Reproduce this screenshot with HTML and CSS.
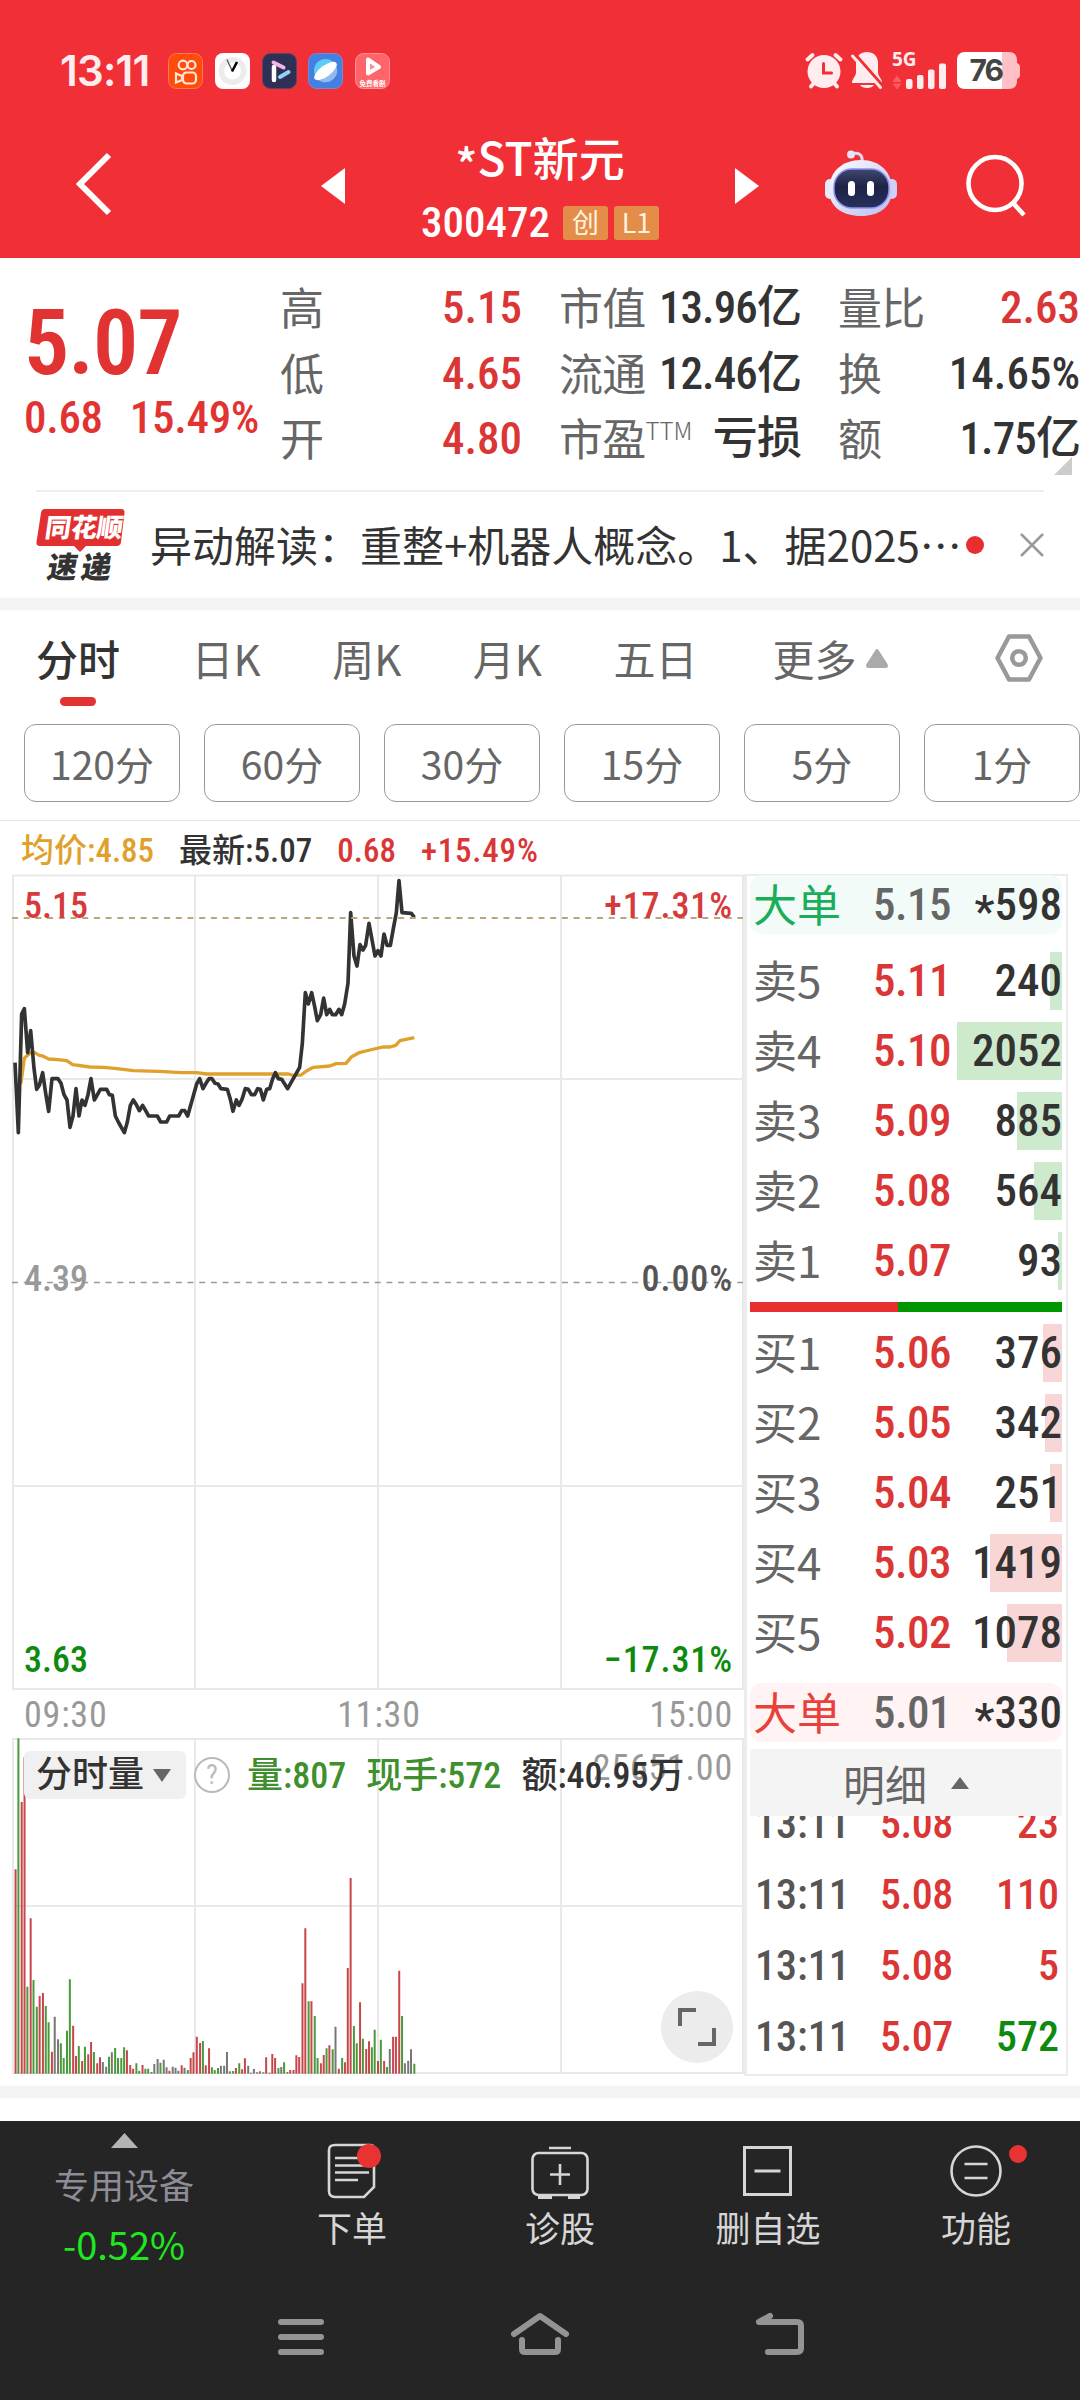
FILE: index.html
```html
<!DOCTYPE html>
<html lang="zh-CN">
<head>
<meta charset="utf-8">
<title>*ST新元 300472</title>
<link rel="stylesheet" href="styles.css">
</head>
<body>
<div class="phone">
  <header class="top">
    <div class="status">
      <span class="clock">13:11</span>
      <div class="apps">
        <svg class="app" viewBox="0 0 35 36"><rect x=".5" y=".5" width="34" height="35" rx="8" fill="#ff4b0b" stroke="#ff7a4a"/><g fill="none" stroke="#ffe6d6" stroke-width="2.2"><circle cx="15" cy="12" r="4.3"/><circle cx="23.5" cy="12" r="4"/><rect x="15" y="19.5" width="13" height="11" rx="3.5"/><path d="M14 23l-6-2.5v9l6-2.500z"/></g></svg>
        <svg class="app" viewBox="0 0 35 36"><rect width="35" height="36" rx="8" fill="#fff"/><circle cx="17.500" cy="18" r="14" fill="#ececec"/><circle cx="17.500" cy="18" r="8.500" fill="#fff"/><path d="M12 6.500l5 11" stroke="#555" stroke-width="1.300"/><path d="M17 18.500l5-9.500" stroke="#000" stroke-width="2.500"/></svg>
        <svg class="app" viewBox="0 0 35 36"><rect x=".5" y=".5" width="34" height="35" rx="8" fill="#2f3055" stroke="#5a4468"/><path d="M12 14v13" stroke="#fff" stroke-width="4.500" stroke-linecap="round"/><path d="M11.500 9.500l10 5" stroke="#f2b6e6" stroke-width="4" stroke-linecap="round"/><path d="M18 24l8.500-5" stroke="#8fd3f5" stroke-width="4" stroke-linecap="round"/></svg>
        <svg class="app" viewBox="0 0 35 36"><rect x=".5" y=".5" width="34" height="35" rx="8" fill="#4380df" stroke="#7d87d8"/><circle cx="17.500" cy="17.500" r="11.500" fill="#5ecbf4"/><path d="M9 26a12 12 0 0 0 20-11z" fill="#94b9ef"/><ellipse cx="17.500" cy="18" rx="13.500" ry="5.500" transform="rotate(-37 17.500 18)" fill="#fff"/></svg>
        <svg class="app" viewBox="0 0 35 36"><rect x=".5" y=".5" width="34" height="35" rx="8" fill="#ff6468" stroke="#ff9093"/><path d="M13 6.500v14l11-6.500z" fill="#ff8d90" stroke="#fff" stroke-width="4" stroke-linejoin="round"/><text x="17.500" y="32.500" class="app-tag">免费看剧</text></svg>
      </div>
      <div class="sys">
        <svg width="38" height="37" viewBox="0 0 38 37"><g stroke="#ffecee" stroke-width="4" stroke-linecap="round"><path d="M2.500 7.500l5-4.500M35.500 7.500l-5-4.500M6 34.500l3-3.500M32 34.500l-3-3.500"/></g><circle cx="19" cy="19.500" r="16.500" fill="#ffecee"/><path d="M18.500 11.500v9.500h8" fill="none" stroke="#f12f37" stroke-width="3" stroke-linecap="round"/></svg>
        <svg class="bell" width="32" height="37" viewBox="0 0 32 37"><path d="M16 0c6 0 11 4 11 10.500V20c0 5 4 6 4 11H1c0-5 4-6 4-11v-9.500C5 4 10 0 16 0zM9 33h14c-2 4-12 4-14 0z" fill="#ffecee"/><path d="M3 1l29 33" stroke="#f12f37" stroke-width="3"/><path d="M1.500 4l28 31.500" stroke="#ffecee" stroke-width="3" stroke-linecap="round"/></svg>
        <svg class="signal" width="56" height="37" viewBox="0 0 56 37"><text x="0" y="14" class="fiveg">5G</text><path d="M.5 30l4.500-7 4.500 7zM.5 31.500h9l-4.500 6z" fill="#ff5c63"/><g fill="#ffecee"><rect x="14" y="27" width="6.500" height="10" rx="2"/><rect x="25" y="23" width="6.500" height="14" rx="2"/><rect x="36" y="17.500" width="6.500" height="19.500" rx="2"/><rect x="47" y="11.500" width="7" height="25.500" rx="2"/></g></svg>
        <svg class="battery" width="63" height="37" viewBox="0 0 63 37"><path d="M45 0h7c5 0 8 3 8 8v3c2 1 3 2 3 4v8c0 2-1 3-3 4v2c0 5-3 8-8 8h-7z" fill="#ffc1c5"/><path d="M8 0h37v37H8c-5 0-8-3-8-8V8c0-5 3-8 8-8z" fill="#fff"/><text x="12.500" y="29" class="batt">76</text></svg>
      </div>
    </div>
    <div class="navrow">
      <svg class="back" width="38" height="66" viewBox="0 0 38 66"><path d="M33 4L4 33l29 29" fill="none" stroke="#fff" stroke-width="6"/></svg>
      <svg class="prev" width="24" height="36" viewBox="0 0 24 36"><path d="M24 0v36L0 18z" fill="#fff"/></svg>
      <div class="title">
        <h1><span class="star">*</span>ST新元</h1>
        <div class="code"><span class="num">300472</span><i class="tag">创</i><i class="tag">L1</i></div>
      </div>
      <svg class="next" width="24" height="36" viewBox="0 0 24 36"><path d="M0 0v36l24-18z" fill="#fff"/></svg>
      <svg class="robot" width="72" height="68" viewBox="0 0 72 68">
        <defs><linearGradient id="shell" x1="0" y1="0" x2="1" y2="1"><stop offset="0" stop-color="#fff"/><stop offset="1" stop-color="#b9bdf0"/></linearGradient><linearGradient id="visor" x1="0" y1="0" x2="0" y2="1"><stop offset="0" stop-color="#41486f"/><stop offset=".45" stop-color="#1c2346"/><stop offset="1" stop-color="#27305c"/></linearGradient></defs>
        <path d="M26 5c7-2 12 0 11 8" fill="none" stroke="#dcdcf5" stroke-width="3"/><circle cx="26" cy="5.500" r="4" fill="#e4e5fa"/>
        <rect x="0" y="30" width="10" height="20" rx="5" fill="#e6e8fb"/><rect x="62" y="30" width="10" height="20" rx="5" fill="#cfd2f5"/>
        <path d="M36 11c19 0 31 12 31 30 0 17-13 26-31 26S4 58 4 41c0-18 13-30 32-30z" fill="url(#shell)"/>
        <rect x="9" y="20" width="55" height="39" rx="18" fill="url(#visor)" stroke="#8f8ff0" stroke-width="1.500"/>
        <rect x="23" y="32" width="7" height="15" rx="3.500" fill="#fff"/><rect x="42" y="32" width="7" height="15" rx="3.500" fill="#fff"/>
      </svg>
      <svg class="search" width="62" height="64" viewBox="0 0 62 64"><circle cx="29" cy="29.500" r="26.500" fill="none" stroke="#fff" stroke-width="4.600"/><path d="M47 49l11 12" stroke="#fff" stroke-width="4.600"/></svg>
    </div>
  </header>

  <section class="quote">
    <div class="price num">
      <div class="last">5.07</div>
      <div class="chg"><span>0.68</span><span>15.49%</span></div>
    </div>
    <dl class="col">
      <div><dt>高</dt><dd class="up">5.15</dd></div>
      <div><dt>低</dt><dd class="up">4.65</dd></div>
      <div><dt>开</dt><dd class="up">4.80</dd></div>
    </dl>
    <dl class="col">
      <div><dt>市值</dt><dd class="tight">13.96亿</dd></div>
      <div><dt>流通</dt><dd class="tight">12.46亿</dd></div>
      <div><dt>市盈<sup>TTM</sup></dt><dd class="tight">亏损</dd></div>
    </dl>
    <dl class="col">
      <div><dt>量比</dt><dd class="up">2.63</dd></div>
      <div><dt>换</dt><dd>14.65%</dd></div>
      <div><dt>额</dt><dd class="tight">1.75亿</dd></div>
    </dl>
    <i class="expand"></i>
  </section>

  <section class="news">
    <svg class="logo" width="90" height="74" viewBox="0 0 90 74"><path d="M9 1h76q4 0 3.500 4L85 34q-.5 4-4.500 4H50l-6 6-6-6H4q-4 0-3.500-4L5 5q.5-4 4-4z" fill="#e23030"/><text x="9" y="29" class="logo-a" transform="skewX(-8) translate(3 0)">同花顺</text><text x="10" y="70" class="logo-b" transform="skewX(-10) translate(12 0)">速递</text></svg>
    <p>异动解读：重整+机器人概念。1、据2025…</p>
    <i class="dot"></i>
    <svg class="close" width="24" height="24" viewBox="0 0 24 24"><path d="M1 1l22 22M23 1L1 23" stroke="#999" stroke-width="2.500"/></svg>
  </section>
  <div class="band"></div>

  <nav class="tabs">
    <span class="on">分时</span><span>日K</span><span>周K</span><span>月K</span><span class="five">五日</span><span class="more">更多<svg width="22" height="19" viewBox="0 0 22 19"><path d="M11 0q1 0 1.500 1l9 14q1.500 4-2 4h-17q-3.500 0-2-4l9-14q.5-1 1.500-1z" fill="#aaa"/></svg></span>
    <svg class="gear" width="48" height="48" viewBox="0 0 48 48"><g fill="none" stroke="#999" stroke-width="4.500" stroke-linejoin="round"><path d="M14 2.500h20L45.500 24 34 45.500H14L2.500 24z"/><circle cx="24" cy="24" r="6.800"/></g></svg>
  </nav>
  <div class="chips"><span>120分</span><span>60分</span><span>30分</span><span>15分</span><span>5分</span><span>1分</span></div>

  <div class="info"><span class="avg">均价:4.85</span><span>最新:5.07</span><span class="up">0.68</span><span class="up pct">+15.49%</span></div>

  <main class="market">
    <div class="chart">
      <svg width="744" height="1202" viewBox="0 874 744 1202">
        <g stroke="#e9e9e9" stroke-width="2" fill="none">
          <path d="M13 875.500h730V1689H13zM195 876v813M378 876v813M561 876v813M13 1079h730M13 1486h730"/>
          <path d="M13 1739h730v334H13zM195 1739v334M378 1739v334M561 1739v334M13 1906h730"/>
        </g>
        <path d="M12 1282.500h731" stroke="#999" stroke-width="1.500" stroke-dasharray="6 5.700"/>
        <g fill="none" stroke-linejoin="round" transform="translate(0 860) scale(.33333)">
          <polyline stroke="#dfa12c" stroke-width="10" points="62,672 67,640 73,594 92,578 104,578 118,586 128,588 146,597 174,599 200,602 218,614 270,621 310,622 345,625 400,632 475,634 545,638 590,638 620,642 865,642 880,646 903,645 918,634 940,622 990,618 1008,611 1038,610 1055,590 1080,577 1110,570 1150,561 1170,561 1187,556 1200,542 1243,533"/>
          <polyline stroke="#333" stroke-width="11" points="45,608 55,818 65,462 73,446 83,578 92,512 102,625 110,688 118,676 128,638 137,700 146,754 156,656 174,656 183,670 192,704 201,720 210,802 219,768 228,686 237,768 246,720 255,736 264,704 273,656 283,720 301,688 320,688 328,704 337,706 346,768 355,786 373,818 382,786 391,736 400,720 410,736 418,752 428,736 446,768 472,768 482,786 500,786 509,768 536,768 545,752 554,752 563,768 572,736 590,672 599,656 609,686 618,670 627,656 636,656 645,670 654,672 663,686 682,688 691,718 699,754 709,720 717,736 726,718 736,686 745,688 754,704 764,704 773,686 781,688 790,720 800,688 809,686 818,656 826,638 835,656 845,658 863,686 882,652 899,622 907,550 916,398 925,432 935,398 944,440 952,482 962,464 971,414 980,464 989,448 997,464 1007,464 1017,448 1025,464 1034,432 1044,370 1052,158 1062,288 1071,318 1080,254 1089,270 1097,256 1107,190 1125,288 1134,272 1143,288 1152,222 1161,256 1171,256 1180,206 1189,158 1197,62 1206,158 1234,160 1243,172"/>
        </g>
        <path d="M12 918h731" stroke="#b9a67b" stroke-width="1.800" stroke-dasharray="6 5.700"/>
        <g class="vol" transform="translate(0 1640) scale(.4719 .33333)">
          <path stroke="#c8464a" d="M33 1301V688M46 1301V486M52 1301V352M65 1301V835M84 1301V1068M91 1301V1059M110 1301V1235M155 1301V1157M161 1301V1248M174 1301V1263M187 1301V1243M193 1301V1206M206 1301V1270M212 1301V1252M269 1301V1231M276 1301V1275M282 1301V1286M302 1301V1275M359 1301V1292M385 1301V1276M404 1301V1254M410 1301V1237M417 1301V1190M424 1301V1209M436 1301V1276M443 1301V1225M500 1301V1284M513 1301V1288M519 1301V1255M545 1301V1297M564 1301V1252M571 1301V1298M577 1301V1242M583 1301V1254M615 1301V1290M622 1301V1290M628 1301V1246M634 1301V1251M641 1301V1030M647 1301V865M660 1301V1084M680 1301V1270M686 1301V1245M698 1301V1216M718 1301V1286M731 1301V1267M737 1301V984M743 1301V714M763 1301V1087M776 1301V1227M782 1301V1204M801 1301V1263M814 1301V1263M833 1301V1190M839 1301V1190M846 1301V992"/>
          <path stroke="#4a9a3c" d="M39 1301V295M58 1301V1040M71 1301V1020M78 1301V1100M97 1301V1098M103 1301V1147M129 1301V1210M135 1301V1254M142 1301V1172M148 1301V1018M167 1301V1218M180 1301V1220M199 1301V1236M231 1301V1250M244 1301V1224M250 1301V1254M257 1301V1254M263 1301V1222M289 1301V1270M295 1301V1292M308 1301V1286M314 1301V1286M340 1301V1268M398 1301V1290M430 1301V1203M449 1301V1282M455 1301V1290M462 1301V1284M487 1301V1294M494 1301V1293M507 1301V1270M558 1301V1297M590 1301V1284M602 1301V1267M609 1301V1296M654 1301V1084M667 1301V1128M673 1301V1254M692 1301V1225M705 1301V1228M725 1301V1254M750 1301V1158M756 1301V1210M769 1301V1196M788 1301V1222M794 1301V1169M807 1301V1199M820 1301V1281M852 1301V1128M878 1301V1271"/>
          <path stroke="#777" d="M116 1301V1130M123 1301V1198M218 1301V1266M225 1301V1280M237 1301V1237M321 1301V1296M327 1301V1272M334 1301V1257M347 1301V1259M353 1301V1282M366 1301V1280M372 1301V1283M378 1301V1292M391 1301V1283M468 1301V1277M475 1301V1277M481 1301V1236M526 1301V1277M532 1301V1298M538 1301V1287M551 1301V1294M596 1301V1281M711 1301V1160M826 1301V1227M858 1301V1270M865 1301V1262M871 1301V1228"/>
        </g>
        <g class="axis">
          <text x="24" y="918" fill="#d63a3a">5.15</text><text x="733" y="918" class="end" fill="#d63a3a">+17.31%</text>
          <text x="24" y="1291" fill="#999">4.39</text><text x="733" y="1291" class="end" fill="#555">0.00%</text>
          <text x="24" y="1672" fill="#0e8a0e">3.63</text><text x="733" y="1672" class="end" fill="#0e8a0e">−17.31%</text>
          <g class="thin" fill="#999"><text x="24" y="1727">09:30</text><text x="379" y="1727" class="mid">11:30</text><text x="733" y="1727" class="end">15:00</text><text x="733" y="1780" class="end">25651.00</text></g>
        </g>
      </svg>
      <div class="volbar">
        <span class="pick">分时量<svg width="18" height="13" viewBox="0 0 18 13"><path d="M0 0h18L9 13z" fill="#666"/></svg></span>
        <i class="help">?</i>
        <span class="down">量:807</span><span class="down">现手:572</span><span class="amt">额:40.95万</span>
      </div>
      <div class="full"><svg width="38" height="38" viewBox="0 0 38 38"><path d="M2 18V2h16M36 20v16H20" fill="none" stroke="#666" stroke-width="4"/></svg></div>
    </div>

    <aside class="book">
      <div class="big sell"><b>大单</b><span>5.15</span><em><u class="star">*</u>598</em></div>
      <ul class="asks">
        <li><b>卖5</b><span>5.11</span><em>240</em><i style="width:12px"></i></li>
        <li><b>卖4</b><span>5.10</span><em>2052</em><i style="width:105px"></i></li>
        <li><b>卖3</b><span>5.09</span><em>885</em><i style="width:45px"></i></li>
        <li><b>卖2</b><span>5.08</span><em>564</em><i style="width:28px"></i></li>
        <li><b>卖1</b><span>5.07</span><em>93</em><i style="width:4px"></i></li>
      </ul>
      <div class="ratio"><i></i></div>
      <ul class="bids">
        <li><b>买1</b><span>5.06</span><em>376</em><i style="width:19px"></i></li>
        <li><b>买2</b><span>5.05</span><em>342</em><i style="width:17px"></i></li>
        <li><b>买3</b><span>5.04</span><em>251</em><i style="width:12px"></i></li>
        <li><b>买4</b><span>5.03</span><em>1419</em><i style="width:72px"></i></li>
        <li><b>买5</b><span>5.02</span><em>1078</em><i style="width:55px"></i></li>
      </ul>
      <div class="big buy"><b>大单</b><span>5.01</span><em><u class="star">*</u>330</em></div>
      <div class="detail">明细<svg width="18" height="12" viewBox="0 0 18 12"><path d="M0 12h18L9 0z" fill="#666"/></svg></div>
      <ul class="ticks">
        <li><b>13:11</b><span>5.08</span><em>23</em></li>
        <li><b>13:11</b><span>5.08</span><em>110</em></li>
        <li><b>13:11</b><span>5.08</span><em>5</em></li>
        <li><b>13:11</b><span>5.07</span><em class="dn">572</em></li>
      </ul>
    </aside>
  </main>
  <div class="band"></div>

  <footer class="bottom">
    <div class="actions">
      <div class="sector"><svg width="27" height="15" viewBox="0 0 27 15"><path d="M0 15h27L13.500 0z" fill="#b4b4b4"/></svg><span>专用设备</span><strong>-0.52%</strong></div>
      <div class="act"><svg width="60" height="56" viewBox="0 0 60 56"><g fill="none" stroke="#d6d6d6" stroke-width="2.600"><path d="M13 2h35q4 0 4 4v38L42 54H13q-6 0-6-6V7q0-5 6-5z"/><path d="M13 15h30M13 22.500h34M13 29.500h34M13 37h23"/></g><circle cx="47" cy="13" r="12" fill="#e93232"/></svg><span>下单</span></div>
      <div class="act"><svg width="60" height="56" viewBox="0 0 60 56"><g fill="none" stroke="#d6d6d6" stroke-width="2.600"><rect x="2.500" y="10" width="55" height="42" rx="6"/><path d="M19 5h22M30 21v21M20 31.500h20"/><path d="M8 54h14M38 54h12" stroke-width="4"/></g></svg><span>诊股</span></div>
      <div class="act"><svg width="60" height="56" viewBox="0 0 60 56"><g fill="none" stroke="#d6d6d6" stroke-width="3"><rect x="6.500" y="4.500" width="46" height="47"/><path d="M16.500 28h26"/></g></svg><span>删自选</span></div>
      <div class="act"><svg width="60" height="56" viewBox="0 0 60 56" overflow="visible"><g fill="none" stroke="#d6d6d6" stroke-width="2.600"><circle cx="30" cy="28" r="24.500"/><path d="M18.500 21h23M18.500 35h23"/></g><circle cx="72" cy="11" r="9" fill="#e93232"/></svg><span>功能</span></div>
    </div>
    <div class="sysnav">
      <svg width="46" height="44" viewBox="0 0 46 44"><path d="M3 9h40M3 24h40M3 39h40" stroke="#949494" stroke-width="6" stroke-linecap="round"/></svg>
      <svg width="60" height="44" viewBox="0 0 60 44"><g fill="none" stroke="#949494" stroke-width="6" stroke-linecap="round" stroke-linejoin="round"><path d="M4 21L30 3l26 18M12 27v9q0 3 3 3h30q3 0 3-3v-9"/></g></svg>
      <svg width="48" height="44" viewBox="0 0 48 44"><path d="M14 3L3 9h38q4 0 4 4v22q0 4-4 4H12" fill="none" stroke="#949494" stroke-width="6" stroke-linecap="round" stroke-linejoin="round"/></svg>
    </div>
  </footer>
</div>
</body>
</html>
```
FILE: styles.css
```css
* { box-sizing: border-box; margin: 0; padding: 0; }
body { width: 1080px; background: #fff; color: #333; font-family: "Noto Sans CJK SC", sans-serif; }
svg { display: block; flex: none; overflow: visible; }
i, em { font-style: normal; }
ul { list-style: none; }
b, em, h1, strong { font-weight: 400; }
.phone { width: 1080px; height: 2400px; display: flex; flex-direction: column; overflow: hidden; }
.num, dd, .axis, .book span, .book em, .ticks b, .info, .volbar { font-family: Roboto, "Noto Sans CJK SC", sans-serif; font-stretch: 75%; font-weight: 500; }
.up { color: #db3636; }
.star { text-decoration: none; vertical-align: -7px; line-height: 0; }

/* header */
.top { height: 258px; background: #f12f37; color: #fff; flex: none; }
.status { height: 141px; display: flex; align-items: center; padding-left: 60px; }
.clock { font: 600 42px/60px Inter, sans-serif; width: 108px; letter-spacing: -.8px; color: #ffecee; }
.apps { display: flex; gap: 11.800px; }
.app { width: 35px; height: 36px; }
.app-tag { font: 700 6.500px "Noto Sans CJK SC", sans-serif; fill: #fff; text-anchor: middle; }
.sys { display: flex; margin-left: 415px; }
.bell { margin-left: 8px; }
.signal { margin-left: 9px; }
.battery { margin-left: 9px; }
.fiveg { font: 700 19px "Open Sans", sans-serif; fill: #ffecee; }
.batt { font: 700 30px Inter, sans-serif; fill: #444; letter-spacing: -2px; }
.navrow { display: flex; align-items: flex-start; height: 117px; padding-left: 76px; }
.back { margin-top: 10px; }
.prev { margin: 27px 0 0 207px; }
.title { width: 390px; display: flex; flex-direction: column; align-items: center; }
h1 { font-size: 46px; font-weight: 500; line-height: 60px; margin-top: -15px; }
.code { display: flex; align-items: center; height: 44px; margin-top: 14px; }
.code .num { font-size: 43px; line-height: 44px; margin-right: 13px; }
.tag { width: 45px; height: 34px; margin: 2px 6px 0 0; border-radius: 3px; background: #e48d48; color: #fff3e0; font-size: 27px; line-height: 32px; text-align: center; }
.tag:last-child { margin-right: 0; }
.next { margin-top: 27px; }
.robot { margin: 8px 0 0 66px; }
.search { margin: 13px 0 0 69px; }

/* quote */
.quote { height: 232px; flex: none; display: flex; gap: 39px; position: relative; padding-top: 17px; }
.price { width: 243px; padding-left: 24px; color: #e23333; white-space: nowrap; }
.last { font-size: 90px; font-weight: 600; line-height: 100px; margin-top: 19px; letter-spacing: -1px; }
.chg { font-size: 45px; line-height: 50px; display: flex; gap: 27px; margin-top: -1px; letter-spacing: -.3px; }
.col { width: 240px; }
.col div { height: 65.700px; display: flex; justify-content: space-between; align-items: center; white-space: nowrap; }
dt { font-size: 44px; line-height: 60px; padding-bottom: 4px; margin-left: -2px; color: #666; letter-spacing: -.8px; }
dt sup { font-size: 24px; font-weight: 300; line-height: 0; vertical-align: 16px; letter-spacing: 0; }
dd { font-size: 45px; line-height: 60px; }
.tight { letter-spacing: -.9px; }
.expand { position: absolute; right: 8px; bottom: 15px; border: 9px solid #ccc; border-left-color: transparent; border-top-color: transparent; }

/* news line */
.news { height: 108px; flex: none; display: flex; align-items: center; margin: 0 36px; border-top: 2px solid #eee; }
.news p { font-size: 42px; line-height: 60px; margin: 0 0 2px 24px; width: 816px; white-space: nowrap; }
.logo-a { font: 900 26px "Noto Sans CJK SC", sans-serif; fill: #fff; }
.logo-b { font: 900 30px "Noto Sans CJK SC", sans-serif; fill: #333; letter-spacing: 4px; }
.dot { width: 18px; height: 18px; border-radius: 9px; background: #e82f2f; }
.close { margin-left: 36px; }
.band { height: 12px; flex: none; background: #f4f4f4; }

/* period tabs */
.tabs { height: 103px; flex: none; display: flex; padding-left: 36px; font-size: 42px; line-height: 96px; color: #666; }
.tabs > span { position: relative; margin-right: 71.500px; }
.tabs .five { margin-right: 75px; }
.tabs .on { color: #333; font-weight: 500; }
.tabs .on::after { content: ""; position: absolute; left: 24px; top: 87px; width: 36px; height: 9px; border-radius: 5px; background: #e23333; }
.tabs .more { display: flex; margin-right: 107px; }
.more svg { margin: 39px 0 0 10px; }
.gear { margin-top: 24px; }
.chips { height: 108px; flex: none; display: flex; gap: 24px; padding: 11px 0 0 24px; border-bottom: 1px solid #e6e6e6; }
.chips span { width: 156px; height: 78px; flex: none; border: 1px solid #999; border-radius: 12px; text-align: center; font-size: 39px; line-height: 77px; color: #666; }
.info { height: 53px; flex: none; display: flex; gap: 25px; padding-left: 21px; font-size: 33px; line-height: 60px; white-space: nowrap; }
.avg { color: #dfa12c; }
.pct { letter-spacing: .8px; }

/* charts */
.market { height: 1212px; flex: none; display: flex; }
.chart { width: 744px; position: relative; }
.axis text { font-size: 36px; }
.axis .thin text { font-weight: 400; letter-spacing: .8px; }
.axis .end { text-anchor: end; letter-spacing: .9px; }
.mid { text-anchor: middle; }
.vol path { vector-effect: non-scaling-stroke; stroke-width: 2; fill: none; }
.volbar { position: absolute; left: 24px; top: 877px; height: 48px; display: flex; align-items: center; font-size: 36px; line-height: 48px; white-space: nowrap; }
.pick { width: 162px; height: 48px; padding-left: 12px; display: flex; align-items: center; gap: 9px; background: #f0f0f0; border-radius: 6px; }
.help { width: 36px; height: 36px; margin: 0 17px 0 8px; border: 2.500px solid #bbb; border-radius: 50%; color: #bbb; font-size: 28px; line-height: 32px; text-align: center; font-weight: 400; }
.down { color: #3f8f2f; margin-right: 20px; }
.down, .amt { padding-top: 2px; }
.full { position: absolute; left: 661px; top: 1117px; width: 72px; height: 72px; border-radius: 50%; background: #ececec; display: flex; align-items: center; justify-content: center; }

/* order book */
.book { width: 324px; height: 1202px; border: 2px solid #ececec; border-left-width: 3px; padding: 0 4px 0 3px; }
.book .big, .book li { display: grid; grid-template-columns: 120px 1fr auto; align-items: center; position: relative; padding: 0 0 0 3px; font-size: 45px; color: #333; }
.book b { font-size: 44px; line-height: 54px; padding-bottom: 4px; color: #666; }
.book span, .book em { position: relative; z-index: 1; line-height: 58px; }
.book span { letter-spacing: -.5px; }
.book li span { color: #db3636; }
.big { height: 59px; border-radius: 12px; }
.big span { color: #666; }
.sell { background: #f2fbf7; margin: -1px 0 18px; }
.book .sell b { color: #1aae5b; }
.buy { background: #fff3f3; }
.book .buy b { color: #e8403a; }
.asks li, .bids li { height: 58px; margin-bottom: 12px; }
.book li i { position: absolute; right: 0; top: 0; height: 58px; }
.asks i { background: #cdeacd; }
.bids i { background: #f9d6d6; }
.ratio { height: 10px; margin: 2px 0 12px; background: #009600; }
.ratio i { display: block; width: 148px; height: 10px; background: #e82f2f; }
.bids { padding-bottom: 9px; }
.detail { height: 67px; margin-top: 7px; background: #f4f4f4; color: #666; font-size: 42px; line-height: 66px; display: flex; align-items: center; justify-content: center; gap: 24px; }
.ticks { height: 256px; overflow: hidden; display: flex; flex-direction: column; justify-content: flex-end; }
.book .ticks li { height: 71px; flex: none; font-size: 42px; padding: 0 3px 0 5px; grid-template-columns: 125px 1fr auto; }
.ticks b { font-size: 42px; padding: 0; color: #555; }
.ticks em { color: #db3636; }
.ticks .dn { color: #0e8a0e; }

/* bottom bars */
.bottom { margin-top: 23px; height: 279px; flex: none; background: #252525; }
.actions { height: 180px; display: flex; }
.sector { width: 248px; display: flex; flex-direction: column; align-items: center; padding-top: 12px; }
.sector span { font-size: 35px; line-height: 50px; margin-top: 11px; color: #8e8c96; }
.sector strong { font-size: 38px; line-height: 50px; margin-top: 10px; color: #1ee81e; }
.act { width: 208px; display: flex; flex-direction: column; align-items: center; padding-top: 22px; font-size: 35px; line-height: 50px; color: #d6d6d6; }
.act span { margin-top: 3px; }
.sysnav { display: flex; justify-content: center; gap: 186px; padding: 12px 0 0 2px; }
```
